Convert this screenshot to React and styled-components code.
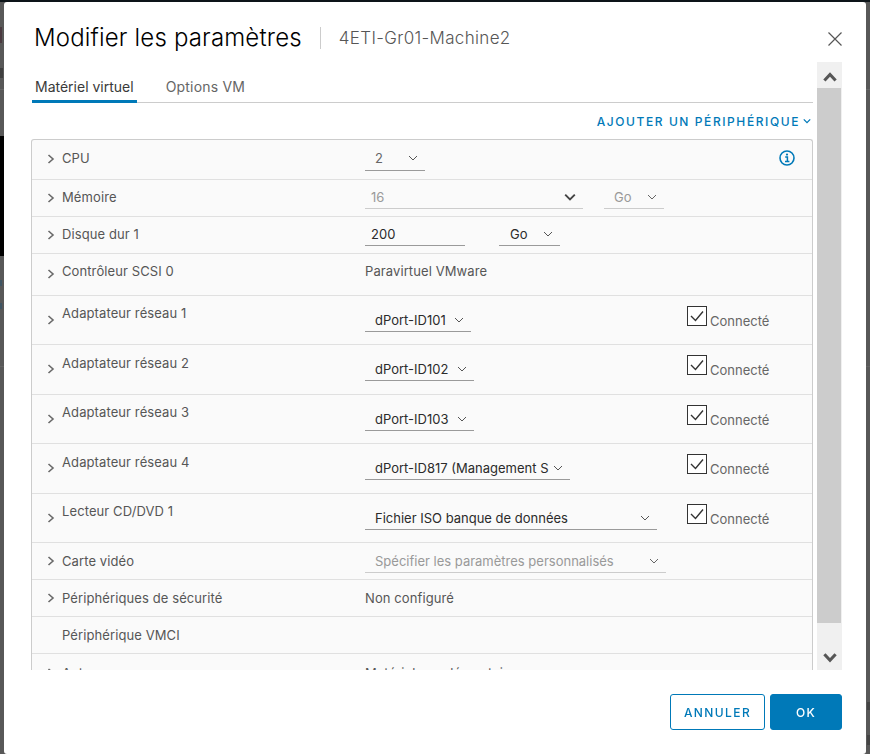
import React from 'react'
import styled, { createGlobalStyle } from 'styled-components'

const Global = createGlobalStyle`
  html, body { margin: 0; padding: 0; height: 100%; overflow: hidden; }
  body { font-family: Inter, "Open Sans", sans-serif; background: #585858; }
`

const Backdrop = styled.div`
  position: fixed;
  inset: 0;
  z-index: -1;
  background:
    linear-gradient(#0d1419, #0d1419) 0 0 / 100% 2px no-repeat,
    linear-gradient(#000, #000) 0 136px / 4px 120px no-repeat,
    linear-gradient(#4a3a40, #4a3a40) 0 27px / 2px 16px no-repeat,
    linear-gradient(#3f3f3f, #3f3f3f) 0 68px / 3px 10px no-repeat,
    linear-gradient(#666, #666) 0 89px / 100% 1px no-repeat,
    linear-gradient(#3f5563, #3f5563) 0 280px / 2px 6px no-repeat,
    linear-gradient(#3f5563, #3f5563) 0 303px / 2px 6px no-repeat,
    linear-gradient(#636363, #636363) 0 366px / 100% 1px no-repeat,
    linear-gradient(#444, #444) 867px 702px / 3px 8px no-repeat,
    linear-gradient(#444, #444) 867px 735px / 3px 10px no-repeat,
    #585858;
`

const Page = styled.div`
  padding: 2px 4px 0;
  height: 752px;
  box-sizing: border-box;
`

const Modal = styled.div`
  background: #fff;
  height: 752px;
  border-radius: 3px;
  display: flex;
  flex-direction: column;
  box-sizing: border-box;
  padding: 0 24px 0 27px;
`

const Header = styled.div`
  height: 60px;
  flex: none;
  display: flex;
  align-items: center;
  padding: 11px 0 0 3px;
  box-sizing: border-box;
`

const Title = styled.h1`
  margin: 0;
  font-size: 24px;
  font-weight: 300;
  color: #000;
  letter-spacing: 0.17px;
  line-height: 30px;
`

const Subtitle = styled.span`
  margin-left: 18px;
  padding-left: 18px;
  height: 22px;
  line-height: 22px;
  border-left: 1px solid #ccc;
  font-size: 17px;
  font-weight: 300;
  color: #565656;
  letter-spacing: 0.33px;
`

const Close = styled.button`
  margin-left: auto;
  margin-top: 2px;
  border: 0;
  padding: 0;
  background: none;
  width: 14px;
  height: 14px;
  display: flex;
`

const Body = styled.div`
  height: 608px;
  flex: none;
  display: flex;
  gap: 4px;
`

const Content = styled.div`
  flex: 1;
  min-width: 0;
  overflow: hidden;
  padding-left: 1px;
`

const Tabs = styled.div`
  height: 41px;
  box-sizing: border-box;
  border-bottom: 1px solid #ccc;
  display: flex;
  align-items: flex-end;
  gap: 26px;
`

const Tab = styled.div`
  height: 31px;
  box-sizing: border-box;
  padding: 4px 3px 0;
  margin-bottom: -1px;
  font-size: 14px;
  line-height: 22px;
  letter-spacing: ${p => (p.$active ? 0 : 0.2)}px;
  color: ${p => (p.$active ? '#3a3a3a' : '#666')};
  border-bottom: 3px solid ${p => (p.$active ? '#0079b8' : 'transparent')};
`

const AddRow = styled.div`
  height: 36px;
  display: flex;
  align-items: center;
  justify-content: flex-end;
  gap: 3px;
  color: #0079b8;
  font-size: 12px;
  font-weight: 500;
  letter-spacing: 1.58px;
  padding: 0 2px 0 0;
  box-sizing: border-box;
`

const Table = styled.div`
  margin-left: -1px;
  border: 1px solid #ccc;
  border-bottom: 0;
  border-radius: 3px 3px 0 0;
  background: #fafafa;
`

const Row = styled.div`
  height: ${p => p.$h}px;
  box-sizing: border-box;
  border-bottom: 1px solid #e0e0e0;
  display: grid;
  grid-template-columns: 333px 322px 1fr;
`

const Label = styled.div`
  display: flex;
  align-items: flex-start;
  padding: ${p => p.$top}px 0 0 15px;
  font-size: 13px;
  line-height: 18px;
  letter-spacing: 0.1px;
  color: #565656;
`

const Arrow = styled.span`
  width: 15px;
  height: 18px;
  flex: none;
  display: flex;
  align-items: center;
  margin-top: ${p => p.$drop}px;
`

const Value = styled.div`
  padding-top: ${p => p.$top}px;
  display: flex;
  align-items: flex-start;
  gap: ${p => p.$gap || 0}px;
`

const Select = styled.div`
  width: ${p => p.$w}px;
  height: ${p => p.$h || 24}px;
  box-sizing: border-box;
  display: flex;
  align-items: center;
  justify-content: space-between;
  padding: 0 ${p => p.$pr || 7}px 0 ${p => p.$pl ?? 10}px;
  border-bottom: 1px solid ${p => (p.$off ? '#ccc' : '#9a9a9a')};
  font-size: 13px;
  color: ${p => (p.$off ? '#999' : p.$soft ? '#666' : '#2b2b2b')};
  white-space: nowrap;
  overflow: hidden;
`

const Static = styled.div`
  font-size: 13px;
  line-height: 18px;
  letter-spacing: 0.1px;
  color: #565656;
`

const Conn = styled.div`
  display: flex;
  align-self: start;
  align-items: flex-end;
  padding-top: 10px;
  gap: 3px;
  font-size: 13px;
  color: #666;
`

const Box = styled.span`
  width: 20px;
  height: 20px;
  box-sizing: border-box;
  border: 1px solid #333;
  display: flex;
  align-items: center;
  justify-content: center;
  background: #fff;
  flex: none;
`

const ConnText = styled.span`
  line-height: 16px;
  margin-bottom: -3px;
`

const Info = styled.span`
  margin-left: auto;
  margin-right: 17px;
  margin-top: 10px;
  width: 16px;
  height: 16px;
`

const Scroll = styled.div`
  width: 25px;
  flex: none;
  background: #f0f0f0;
  display: flex;
  flex-direction: column;
`

const ScrollBtn = styled.div`
  height: ${p => p.$h}px;
  box-sizing: border-box;
  padding-top: ${p => p.$top}px;
  flex: none;
  display: flex;
  align-items: center;
  justify-content: center;
`

const Thumb = styled.div`
  flex: 1;
  background: #ccc;
  margin-right: 1px;
`

const Footer = styled.div`
  flex: 1;
  display: flex;
  justify-content: flex-end;
  align-items: flex-start;
  gap: 5px;
  padding-top: 24px;
`

const Btn = styled.button`
  height: 36px;
  width: ${p => p.$w}px;
  box-sizing: border-box;
  border-radius: 3px;
  border: 1px solid #0079b8;
  background: ${p => (p.$primary ? '#0079b8' : '#fff')};
  color: ${p => (p.$primary ? '#fff' : '#0079b8')};
  font-family: inherit;
  font-size: 12px;
  font-weight: 500;
  letter-spacing: 1.4px;
  padding: 0;
`

const paths = {
  right: 'M1.5 1 L6 5 L1.5 9',
  down: 'M1 3 L5 7 L9 3',
  up: 'M1 7 L5 3 L9 7',
  scrollUp: 'M1 7.5 L5 3.2 L9 7.5',
  scrollDown: 'M1 3 L5 7.3 L9 3',
}

const Chevron = ({ dir = 'right', size = 10, color = '#6a6a6a', width = 1.6 }) => (
  <svg width={size} height={size} viewBox="0 0 10 10" fill="none">
    <path d={paths[dir]} stroke={color} strokeWidth={width} />
  </svg>
)

const Drop = ({ children, ...rest }) => (
  <Select {...rest}>
    <span>{children}</span>
    <Chevron dir="down" color={rest.$off ? '#666' : '#555'} width={1} />
  </Select>
)

const Connected = () => (
  <Conn>
    <Box>
      <svg width="16" height="14" viewBox="0 0 16 14" fill="none">
        <path d="M2 7 L6.5 11.5 L14 2.5" stroke="#333" strokeWidth="1.4" />
      </svg>
    </Box>
    <ConnText>Connecté</ConnText>
  </Conn>
)

const nics = [
  { name: 'Adaptateur réseau 1', port: 'dPort-ID101', w: 106, h: 49, top: 8 },
  { name: 'Adaptateur réseau 2', port: 'dPort-ID102', w: 109, h: 50, top: 9 },
  { name: 'Adaptateur réseau 3', port: 'dPort-ID103', w: 109, h: 49, top: 8 },
  { name: 'Adaptateur réseau 4', port: 'dPort-ID817 (Management S', w: 205, h: 50, top: 9 },
]

const TallRow = ({ name, h, w, value, top = 8 }) => (
  <Row $h={h}>
    <Label $top={top}>
      <Arrow $drop={15 - top}><Chevron /></Arrow>
      {name}
    </Label>
    <Value $top={12}>
      <Drop $w={w}>{value}</Drop>
    </Value>
    <Connected />
  </Row>
)

export default function App() {
  return (
    <>
      <Global />
      <Backdrop />
      <Page>
        <Modal>
          <Header>
            <Title>Modifier les paramètres</Title>
            <Subtitle>4ETI-Gr01-Machine2</Subtitle>
            <Close>
              <svg width="14" height="14" viewBox="0 0 14 14" fill="none">
                <path d="M0.5 0.5 L13.5 13.5 M13.5 0.5 L0.5 13.5" stroke="#565656" strokeWidth="1.2" />
              </svg>
            </Close>
          </Header>
          <Body>
            <Content>
              <Tabs>
                <Tab $active>Matériel virtuel</Tab>
                <Tab>Options VM</Tab>
              </Tabs>
              <AddRow>
                AJOUTER UN PÉRIPHÉRIQUE
                <Chevron dir="down" size={8} color="#0079b8" />
              </AddRow>
              <Table>
                <Row $h={40}>
                  <Label $top={9}>
                    <Arrow $drop={1}><Chevron /></Arrow>
                    CPU
                  </Label>
                  <Value $top={6}>
                    <Drop $w={60} $h={25} $soft>2</Drop>
                  </Value>
                  <Info>
                    <svg width="16" height="16" viewBox="0 0 16 16" fill="none">
                      <circle cx="8" cy="8" r="7" stroke="#0079b8" strokeWidth="1.6" />
                      <path d="M6.2 7 H8.4 V11.6 M6 11.6 H10.4" stroke="#0079b8" strokeWidth="1.5" />
                      <circle cx="8" cy="4.6" r="1.1" fill="#0079b8" />
                    </svg>
                  </Info>
                </Row>
                <Row $h={37}>
                  <Label $top={8}>
                    <Arrow $drop={1}><Chevron /></Arrow>
                    Mémoire
                  </Label>
                  <Value $top={5} $gap={21}>
                    <Select $w={218} $off $pl={6}>
                      <span>16</span>
                      <Chevron dir="down" size={12} color="#444" />
                    </Select>
                    <Drop $w={60} $off>Go</Drop>
                  </Value>
                  <div />
                </Row>
                <Row $h={37}>
                  <Label $top={8}>
                    <Arrow $drop={1}><Chevron /></Arrow>
                    Disque dur 1
                  </Label>
                  <Value $top={5} $gap={34}>
                    <Select $w={100} $pl={6}>200</Select>
                    <Drop $w={61} $pl={11}>Go</Drop>
                  </Value>
                  <div />
                </Row>
                <Row $h={42}>
                  <Label $top={8}>
                    <Arrow $drop={3}><Chevron /></Arrow>
                    Contrôleur SCSI 0
                  </Label>
                  <Value $top={8}>
                    <Static>Paravirtuel VMware</Static>
                  </Value>
                  <div />
                </Row>
                {nics.map(n => (
                  <TallRow key={n.name} name={n.name} h={n.h} w={n.w} value={n.port} top={n.top} />
                ))}
                <TallRow name="Lecteur CD/DVD 1" h={49} w={292} value="Fichier ISO banque de données" />
                <Row $h={37}>
                  <Label $top={9}>
                    <Arrow><Chevron /></Arrow>
                    Carte vidéo
                  </Label>
                  <Value $top={6}>
                    <Drop $w={301} $off>Spécifier les paramètres personnalisés</Drop>
                  </Value>
                  <div />
                </Row>
                <Row $h={37}>
                  <Label $top={9}>
                    <Arrow><Chevron /></Arrow>
                    Périphériques de sécurité
                  </Label>
                  <Value $top={9}>
                    <Static>Non configuré</Static>
                  </Value>
                  <div />
                </Row>
                <Row $h={37}>
                  <Label $top={9}>
                    <Arrow />
                    Périphérique VMCI
                  </Label>
                  <div />
                  <div />
                </Row>
                <Row $h={37}>
                  <Label $top={10}>
                    <Arrow><Chevron /></Arrow>
                    Autres
                  </Label>
                  <Value $top={10}>
                    <Static>Matériel supplémentaire</Static>
                  </Value>
                  <div />
                </Row>
              </Table>
            </Content>
            <Scroll>
              <ScrollBtn $h={26} $top={4}><Chevron dir="scrollUp" size={14} color="#565656" width={2.2} /></ScrollBtn>
              <Thumb />
              <ScrollBtn $h={47} $top={21}><Chevron dir="scrollDown" size={14} color="#565656" width={2.2} /></ScrollBtn>
            </Scroll>
          </Body>
          <Footer>
            <Btn $w={95}>ANNULER</Btn>
            <Btn $w={72} $primary>OK</Btn>
          </Footer>
        </Modal>
      </Page>
    </>
  )
}
